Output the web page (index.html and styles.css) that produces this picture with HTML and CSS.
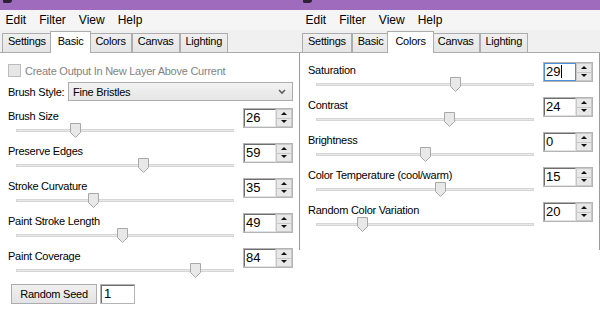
FILE: index.html
```html
<!DOCTYPE html>
<html lang="en">
<head>
<meta charset="UTF-8">
<meta name="viewport" content="width=device-width, initial-scale=1.0">
<title>Oil Painting - settings</title>
<link rel="stylesheet" href="styles.css">
</head>
<body>
<div class="desk">

    <!-- left window: Basic tab -->
    <div class="win">
        <div class="titlebar"><span class="ttl-icon"></span></div>
        <div class="menu">
            <span class="menu-item">Edit</span>
            <span class="menu-item">Filter</span>
            <span class="menu-item">View</span>
            <span class="menu-item">Help</span>
        </div>
        <div class="tabs">
            <span class="tab">Settings</span>
            <span class="tab active">Basic</span>
            <span class="tab">Colors</span>
            <span class="tab">Canvas</span>
            <span class="tab">Lighting</span>
        </div>
        <div class="pane">
            <div class="check">
                <span class="check-box"></span>
                <span>Create Output In New Layer Above Current</span>
            </div>
            <div class="style-row">
                <span>Brush Style:</span>
                <div class="combo">
                    <span>Fine Bristles</span>
                    <svg class="chev" width="8" height="6" viewBox="0 0 8 6"><polyline points="1,1 4,4 7,1" fill="none" stroke="#606060" stroke-width="1.6"/></svg>
                </div>
            </div>
            <div class="rows first-rows">
                <div class="row">
                    <div class="row-main">
                        <span class="lbl">Brush Size</span>
                        <div class="slider"><div class="track"></div><div class="rail"><svg class="thumb" style="left:26%" width="11" height="15" viewBox="0 0 11 15"><path d="M0.5 0.5 H10.5 V9.5 L5.5 14.5 L0.5 9.5 Z" fill="#e8e8e8" stroke="#a8a8a8"/></svg></div></div>
                    </div>
                    <div class="spin"><div class="spin-val">26</div><div class="spin-btns"><span class="spin-btn up"></span><span class="spin-btn down"></span></div></div>
                </div>
                <div class="row">
                    <div class="row-main">
                        <span class="lbl">Preserve Edges</span>
                        <div class="slider"><div class="track"></div><div class="rail"><svg class="thumb" style="left:59%" width="11" height="15" viewBox="0 0 11 15"><path d="M0.5 0.5 H10.5 V9.5 L5.5 14.5 L0.5 9.5 Z" fill="#e8e8e8" stroke="#a8a8a8"/></svg></div></div>
                    </div>
                    <div class="spin"><div class="spin-val">59</div><div class="spin-btns"><span class="spin-btn up"></span><span class="spin-btn down"></span></div></div>
                </div>
                <div class="row">
                    <div class="row-main">
                        <span class="lbl">Stroke Curvature</span>
                        <div class="slider"><div class="track"></div><div class="rail"><svg class="thumb" style="left:35%" width="11" height="15" viewBox="0 0 11 15"><path d="M0.5 0.5 H10.5 V9.5 L5.5 14.5 L0.5 9.5 Z" fill="#e8e8e8" stroke="#a8a8a8"/></svg></div></div>
                    </div>
                    <div class="spin"><div class="spin-val">35</div><div class="spin-btns"><span class="spin-btn up"></span><span class="spin-btn down"></span></div></div>
                </div>
                <div class="row">
                    <div class="row-main">
                        <span class="lbl">Paint Stroke Length</span>
                        <div class="slider"><div class="track"></div><div class="rail"><svg class="thumb" style="left:49%" width="11" height="15" viewBox="0 0 11 15"><path d="M0.5 0.5 H10.5 V9.5 L5.5 14.5 L0.5 9.5 Z" fill="#e8e8e8" stroke="#a8a8a8"/></svg></div></div>
                    </div>
                    <div class="spin"><div class="spin-val">49</div><div class="spin-btns"><span class="spin-btn up"></span><span class="spin-btn down"></span></div></div>
                </div>
                <div class="row">
                    <div class="row-main">
                        <span class="lbl">Paint Coverage</span>
                        <div class="slider"><div class="track"></div><div class="rail"><svg class="thumb" style="left:84%" width="11" height="15" viewBox="0 0 11 15"><path d="M0.5 0.5 H10.5 V9.5 L5.5 14.5 L0.5 9.5 Z" fill="#e8e8e8" stroke="#a8a8a8"/></svg></div></div>
                    </div>
                    <div class="spin"><div class="spin-val">84</div><div class="spin-btns"><span class="spin-btn up"></span><span class="spin-btn down"></span></div></div>
                </div>
            </div>
            <div class="seed">
                <span class="btn">Random Seed</span>
                <span class="seed-val">1</span>
            </div>
        </div>
    </div>

    <!-- right window: Colors tab -->
    <div class="win">
        <div class="titlebar"><span class="ttl-icon"></span></div>
        <div class="menu">
            <span class="menu-item">Edit</span>
            <span class="menu-item">Filter</span>
            <span class="menu-item">View</span>
            <span class="menu-item">Help</span>
        </div>
        <div class="tabs">
            <span class="tab">Settings</span>
            <span class="tab">Basic</span>
            <span class="tab active">Colors</span>
            <span class="tab">Canvas</span>
            <span class="tab">Lighting</span>
        </div>
        <div class="pane">
            <div class="rows color-rows">
                <div class="row">
                    <div class="row-main">
                        <span class="lbl">Saturation</span>
                        <div class="slider"><div class="track"></div><div class="rail"><svg class="thumb" style="left:64.5%" width="11" height="15" viewBox="0 0 11 15"><path d="M0.5 0.5 H10.5 V9.5 L5.5 14.5 L0.5 9.5 Z" fill="#e8e8e8" stroke="#a8a8a8"/></svg></div></div>
                    </div>
                    <div class="spin"><div class="spin-val focus">29<span class="caret"></span></div><div class="spin-btns"><span class="spin-btn up"></span><span class="spin-btn down"></span></div></div>
                </div>
                <div class="row">
                    <div class="row-main">
                        <span class="lbl">Contrast</span>
                        <div class="slider"><div class="track"></div><div class="rail"><svg class="thumb" style="left:62%" width="11" height="15" viewBox="0 0 11 15"><path d="M0.5 0.5 H10.5 V9.5 L5.5 14.5 L0.5 9.5 Z" fill="#e8e8e8" stroke="#a8a8a8"/></svg></div></div>
                    </div>
                    <div class="spin"><div class="spin-val">24</div><div class="spin-btns"><span class="spin-btn up"></span><span class="spin-btn down"></span></div></div>
                </div>
                <div class="row">
                    <div class="row-main">
                        <span class="lbl">Brightness</span>
                        <div class="slider"><div class="track"></div><div class="rail"><svg class="thumb" style="left:50%" width="11" height="15" viewBox="0 0 11 15"><path d="M0.5 0.5 H10.5 V9.5 L5.5 14.5 L0.5 9.5 Z" fill="#e8e8e8" stroke="#a8a8a8"/></svg></div></div>
                    </div>
                    <div class="spin"><div class="spin-val">0</div><div class="spin-btns"><span class="spin-btn up"></span><span class="spin-btn down"></span></div></div>
                </div>
                <div class="row">
                    <div class="row-main">
                        <span class="lbl">Color Temperature (cool/warm)</span>
                        <div class="slider"><div class="track"></div><div class="rail"><svg class="thumb" style="left:57.5%" width="11" height="15" viewBox="0 0 11 15"><path d="M0.5 0.5 H10.5 V9.5 L5.5 14.5 L0.5 9.5 Z" fill="#e8e8e8" stroke="#a8a8a8"/></svg></div></div>
                    </div>
                    <div class="spin"><div class="spin-val">15</div><div class="spin-btns"><span class="spin-btn up"></span><span class="spin-btn down"></span></div></div>
                </div>
                <div class="row">
                    <div class="row-main">
                        <span class="lbl">Random Color Variation</span>
                        <div class="slider"><div class="track"></div><div class="rail"><svg class="thumb" style="left:20%" width="11" height="15" viewBox="0 0 11 15"><path d="M0.5 0.5 H10.5 V9.5 L5.5 14.5 L0.5 9.5 Z" fill="#e8e8e8" stroke="#a8a8a8"/></svg></div></div>
                    </div>
                    <div class="spin"><div class="spin-val">20</div><div class="spin-btns"><span class="spin-btn up"></span><span class="spin-btn down"></span></div></div>
                </div>
            </div>
        </div>
    </div>

</div>
</body>
</html>
```

FILE: styles.css
```css
body {
    margin: 0;
    background: #fff;
    font-family: "Liberation Sans", Arial, sans-serif;
    font-size: 11px;
    letter-spacing: -0.25px;
    color: #000;
}
.desk {
    display: flex;
}
.win {
    width: 300px;
    flex: none;
}
.titlebar {
    height: 10px;
    background: #9e6bbd;
}
.ttl-icon {
    display: block;
    width: 9px;
    height: 3px;
    margin-left: 3px;
    background: #2b2233;
    border-radius: 0 0 4px 2px;
}
.menu {
    display: flex;
    height: 20px;
    margin-left: -1px;
    background: #f5f5f5;
    font-size: 12px;
    line-height: 20px;
    letter-spacing: 0;
}
.menu-item {
    padding: 0 6.5px;
}
.tabs {
    display: flex;
    align-items: flex-end;
    height: 22px;
    padding-left: 2px;
    background: #f0f0f0;
}
.tab {
    height: 16px;
    padding: 0 5px 2px;
    line-height: 14px;
    border: 1px solid #acacac;
    border-bottom: none;
    background: linear-gradient(#f0f0f0, #e5e5e5);
}
.tab.active {
    position: relative;
    z-index: 1;
    height: 17px;
    margin: 0 -2px -1px;
    padding: 2px 7px 2px;
    background: #fff;
}
/* the frame's side line stops at y=250, the controls run on below it */
.pane {
    border-top: 1px solid #acacac;
    background: #fff linear-gradient(#9a9a9a, #9a9a9a) right top / 1px 197px no-repeat;
}
.check {
    display: flex;
    align-items: center;
    height: 13px;
    margin: 11px 0 0 8px;
    color: #838383;
}
.check-box {
    width: 13px;
    height: 13px;
    box-sizing: border-box;
    margin-right: 4px;
    border: 1px solid #bcbcbc;
    background: #e6e6e6;
}
.style-row {
    display: flex;
    align-items: center;
    height: 19px;
    margin-top: 5px;
    padding: 0 7px 0 8px;
}
.combo {
    display: flex;
    align-items: center;
    justify-content: space-between;
    box-sizing: border-box;
    width: 225px;
    height: 19px;
    margin-left: auto;
    padding: 0 6px 0 4px;
    border: 1px solid #acacac;
    background: linear-gradient(#f2f2f2, #e6e6e6);
}
.first-rows {
    margin-top: 7px;
}
.color-rows {
    padding-top: 9px;
    height: 188px;
}
.row {
    display: flex;
    height: 35px;
    padding-left: 8px;
}
.row-main {
    width: 235px;
    display: flex;
    flex-direction: column;
}
.lbl {
    margin-top: 2px;
    line-height: 13px;
    white-space: nowrap;
}
.slider {
    position: relative;
    width: 218px;
    height: 15px;
    margin-left: 8px;
}
.track {
    height: 1px;
    margin-top: 6px;
    border: 1px solid #d6d6d6;
    background: #e7eaea;
}
.rail {
    position: absolute;
    top: 0;
    left: 5px;
    right: 5px;
    height: 15px;
}
.thumb {
    position: absolute;
    top: 0;
    margin-left: -5.5px;
}
.spin {
    display: flex;
    box-sizing: border-box;
    width: 50px;
    height: 20px;
    border: 1px solid #b4b4b4;
}
.spin-val {
    width: 32px;
    box-sizing: border-box;
    padding-left: 1px;
    border-top: 1px solid #6e6e6e;
    border-left: 1px solid #6e6e6e;
    border-right: 1px solid #e3e3e3;
    border-bottom: 1px solid #e3e3e3;
    font-size: 13px;
    line-height: 16px;
    letter-spacing: 0;
}
.spin-val.focus {
    border: 1px solid #4a90d9;
}
.caret {
    display: inline-block;
    width: 1px;
    height: 13px;
    margin-left: 1px;
    vertical-align: -2px;
    background: #000;
}
.spin-btns {
    display: flex;
    flex-direction: column;
    width: 16px;
}
.spin-btn {
    position: relative;
    flex: 1;
    border: 1px solid #c8c8c8;
    background: #e8e8e8;
}
.spin-btn + .spin-btn {
    border-top: none;
}
.spin-btn::before {
    content: "";
    position: absolute;
    left: 50%;
    top: 50%;
    margin: -2px 0 0 -3px;
    border-left: 3px solid transparent;
    border-right: 3px solid transparent;
}
.spin-btn.up::before {
    border-bottom: 3px solid #111;
}
.spin-btn.down::before {
    border-top: 3px solid #111;
}
.seed {
    display: flex;
    margin-top: 1px;
    padding-left: 11px;
}
.btn {
    box-sizing: border-box;
    width: 86px;
    height: 20px;
    line-height: 18px;
    text-align: center;
    border: 1px solid #acacac;
    background: linear-gradient(#f0f0f0, #e3e3e3);
}
.seed-val {
    box-sizing: border-box;
    width: 35px;
    height: 20px;
    margin-left: 3px;
    padding-left: 3px;
    border: 1px solid #b4b4b4;
    box-shadow: inset 1px 1px 0 #6e6e6e;
    font-size: 13px;
    line-height: 18px;
    letter-spacing: 0;
}
```
